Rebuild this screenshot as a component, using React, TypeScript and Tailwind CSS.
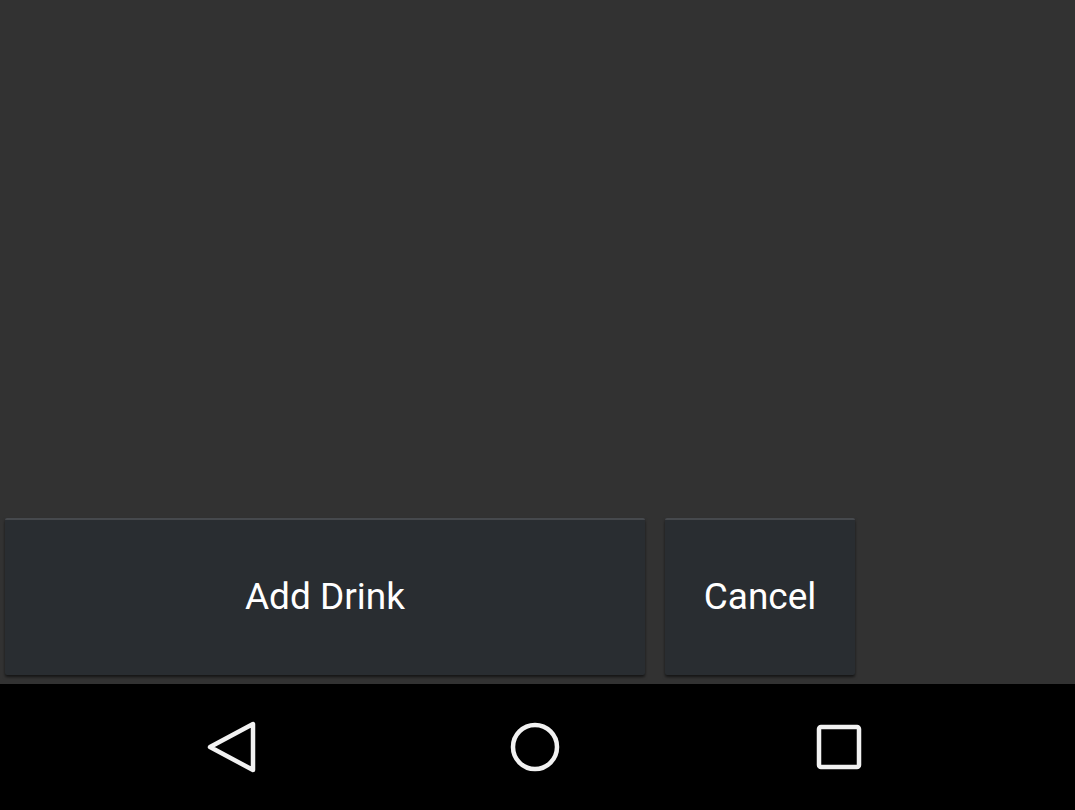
export default function App() {
  return (
    <div
      className="w-[1075px] h-[810px] flex flex-col bg-[#323232]"
      style={{ fontFamily: 'Roboto, "Liberation Sans", sans-serif' }}
    >
      <div className="flex-1 flex flex-col justify-end">
        <div className="flex gap-[20px] pl-[5px] pb-[9px]">
          <button className="w-[640px] h-[157px] bg-[#292d31] border-t-2 border-[#46494d] rounded-[2px] shadow-[0_2px_3px_rgba(0,0,0,0.6)] text-white text-[37px] leading-none pb-[2px]">
            Add Drink
          </button>
          <button className="w-[190px] h-[157px] bg-[#292d31] border-t-2 border-[#46494d] rounded-[2px] shadow-[0_2px_3px_rgba(0,0,0,0.6)] text-white text-[37px] leading-none pb-[2px]">
            Cancel
          </button>
        </div>
      </div>
      <div className="h-[126px] bg-black flex items-center pl-[182px]">
        <div className="w-[100px] flex justify-center">
          <svg width="52" height="52" viewBox="0 0 52 52">
            <path d="M47 3 L47 49 L4 26 Z" fill="none" stroke="#f2f2f2" strokeWidth="4.5" strokeLinejoin="round" />
          </svg>
        </div>
        <div className="w-[100px] flex justify-center ml-[203px]">
          <svg width="52" height="52" viewBox="0 0 52 52">
            <circle cx="26" cy="26" r="22" fill="none" stroke="#f2f2f2" strokeWidth="4.5" />
          </svg>
        </div>
        <div className="w-[100px] flex justify-center ml-[204px]">
          <svg width="46" height="46" viewBox="0 0 46 46">
            <rect x="3" y="3" width="40" height="40" rx="2" fill="none" stroke="#f2f2f2" strokeWidth="4.5" />
          </svg>
        </div>
      </div>
    </div>
  );
}
